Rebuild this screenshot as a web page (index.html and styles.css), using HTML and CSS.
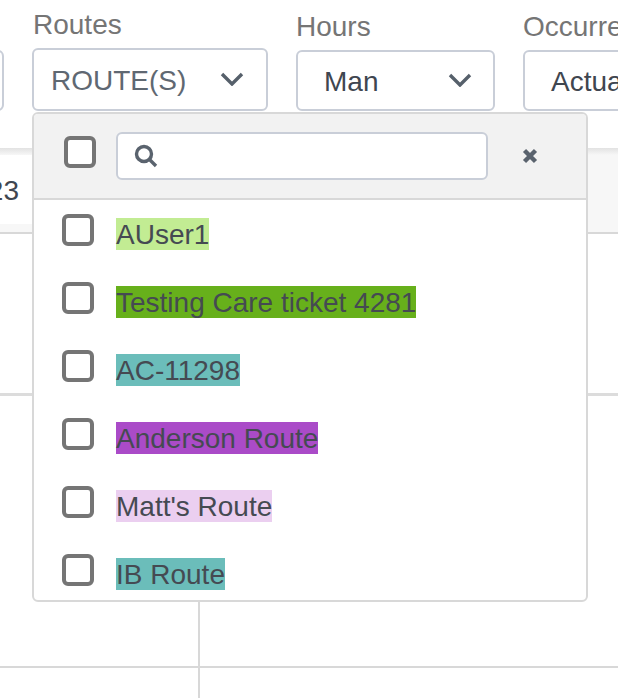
FILE: index.html

```html
<!DOCTYPE html>
<html lang="en">
<head>
  <meta charset="UTF-8" />
  <meta name="viewport" content="width=device-width, initial-scale=1.0"/>
  <title>Routes filter</title>
  <link rel="stylesheet" href="styles.css">
</head>
<body>
  <div class="filters">
    <div class="field field-cut">
      <div class="select"></div>
    </div>
    <div class="field field-routes">
      <div class="label">Routes</div>
      <div class="select select-tall">
        <span class="select-text muted">ROUTE(S)</span>
        <svg class="chevron" viewBox="0 0 24 14"><path d="M2 2 L12 12 L22 2"/></svg>
      </div>
    </div>
    <div class="field field-hours">
      <div class="label">Hours</div>
      <div class="select">
        <span class="select-text">Man</span>
        <svg class="chevron" viewBox="0 0 24 14"><path d="M2 2 L12 12 L22 2"/></svg>
      </div>
    </div>
    <div class="field field-occ">
      <div class="label">Occurrence</div>
      <div class="select">
        <span class="select-text">Actual</span>
      </div>
    </div>
  </div>

  <div class="strip">
    <div class="date-cell">123</div>
  </div>
  <div class="grid-row grid-row-first"></div>
  <div class="grid-row grid-row-second">
    <div class="grid-col"></div>
  </div>
  <div class="grid-row grid-row-last">
    <div class="grid-col"></div>
  </div>

  <div class="dropdown">
    <div class="dropdown-head">
      <span class="check check-head"></span>
      <div class="search">
        <svg class="search-icon" viewBox="0 0 24 24"><circle cx="10" cy="10" r="7.5"/><path d="M15.5 15.5 L22 22"/></svg>
      </div>
      <svg class="close" viewBox="0 0 16 16"><path d="M2.5 2.5 L13.5 13.5 M13.5 2.5 L2.5 13.5"/></svg>
    </div>
    <ul class="route-list">
      <li class="route"><span class="check"></span><span class="tag tag-lime">AUser1</span></li>
      <li class="route"><span class="check"></span><span class="tag tag-green">Testing Care ticket 4281</span></li>
      <li class="route"><span class="check"></span><span class="tag tag-teal">AC-11298</span></li>
      <li class="route"><span class="check"></span><span class="tag tag-purple">Anderson Route</span></li>
      <li class="route"><span class="check"></span><span class="tag tag-pink">Matt's Route</span></li>
      <li class="route"><span class="check"></span><span class="tag tag-teal">IB Route</span></li>
    </ul>
  </div>
</body>
</html>
```

FILE: styles.css

```css
html, body {
  height: 698px;
  overflow: hidden;
}
body {
  margin: 0;
  position: relative;
  background: #fff;
  font-family: "Liberation Sans", Arial, sans-serif;
  color: #454a52;
}

/* filter bar */
.filters {
  display: flex;
  align-items: flex-end;
  gap: 28px;
  height: 111px;
  margin-left: -56px;
  padding-bottom: 37px;
}
.field {
  flex: none;
}
.field-cut { width: 60px; }
.field-routes { width: 236px; }
.field-hours { width: 199px; }
.field-occ { width: 200px; }
.label {
  font-size: 28px;
  line-height: 30px;
  color: #757575;
  margin-bottom: 8px;
}
.field-routes .label {
  padding-left: 1px;
}
.select {
  display: flex;
  align-items: center;
  justify-content: space-between;
  box-sizing: border-box;
  height: 61px;
  padding: 0 21px 0 26px;
  background: #fff;
  border: 2px solid #c9ced8;
  border-radius: 6px;
}
.select-tall {
  height: 63px;
  padding: 0 22px 0 17px;
}
.select-text {
  font-size: 28px;
  line-height: 32px;
  margin-top: 2px;
  color: #3f4650;
  white-space: nowrap;
}
.select-text.muted {
  color: #5f6872;
}
.chevron {
  width: 24px;
  height: 14px;
  margin-top: -1px;
  fill: none;
  stroke: #56606b;
  stroke-width: 3.4;
}

/* table behind the dropdown */
.strip {
  box-sizing: border-box;
  height: 86px;
  background: linear-gradient(#e2e2e2, #f7f7f7 7px);
  border-bottom: 2px solid #d8d8d8;
  padding-top: 7px;
}
.date-cell {
  box-sizing: border-box;
  width: 33px;
  height: 69px;
  background: #fff;
  font-size: 28px;
  line-height: 71px;
  color: #3f4650;
  direction: rtl;
  overflow: hidden;
  padding-right: 14px;
  white-space: nowrap;
}
.grid-row {
  box-sizing: border-box;
  border-bottom: 3px solid #dcdcdc;
}
.grid-row-first {
  height: 162px;
}
.grid-row-second {
  height: 272px;
  border-bottom-width: 2px;
  border-bottom-color: #d8d8d8;
  display: flex;
}
.grid-row-last {
  height: 40px;
  border: 0;
  display: flex;
}
.grid-col {
  width: 200px;
  box-sizing: border-box;
  border-right: 2px solid #d8d8d8;
}

/* routes dropdown */
.dropdown {
  position: absolute;
  left: 32px;
  top: 112px;
  box-sizing: border-box;
  width: 556px;
  height: 490px;
  background: #fff;
  border: 2px solid #d8d8d8;
  border-radius: 6px;
  overflow: hidden;
}
.dropdown-head {
  display: flex;
  align-items: center;
  box-sizing: border-box;
  height: 86px;
  padding: 0 48px 0 30px;
  background: #f2f2f2;
  border-bottom: 2px solid #d8d8d8;
}
.check {
  display: block;
  flex: none;
  box-sizing: border-box;
  width: 32px;
  height: 32px;
  background: #fff;
  border: 4px solid #757575;
  border-radius: 6px;
}
.check-head {
  margin-bottom: 8px;
}
.search {
  display: flex;
  align-items: center;
  box-sizing: border-box;
  width: 372px;
  height: 48px;
  margin-left: 20px;
  padding-left: 16px;
  background: #fff;
  border: 2px solid #c9ced8;
  border-radius: 6px;
}
.search-icon {
  width: 24px;
  height: 24px;
  fill: none;
  stroke: #5a636e;
  stroke-width: 3.4;
}
.close {
  width: 16px;
  height: 16px;
  margin-left: 34px;
  fill: none;
  stroke: #5a636e;
  stroke-width: 4.4;
}
.route-list {
  list-style: none;
  margin: 0;
  padding: 0;
}
.route {
  display: flex;
  align-items: flex-start;
  gap: 22px;
  height: 68px;
  padding: 14px 0 0 28px;
  box-sizing: border-box;
}
.tag {
  margin-top: 4px;
  height: 32px;
  line-height: 34px;
  font-size: 28px;
  white-space: nowrap;
}
.tag-lime { background: #c2ec93; }
.tag-green { background: #67b01b; }
.tag-teal { background: #6bbdba; }
.tag-purple { background: #aa4bc8; }
.tag-pink { background: #ebcff0; }
```
